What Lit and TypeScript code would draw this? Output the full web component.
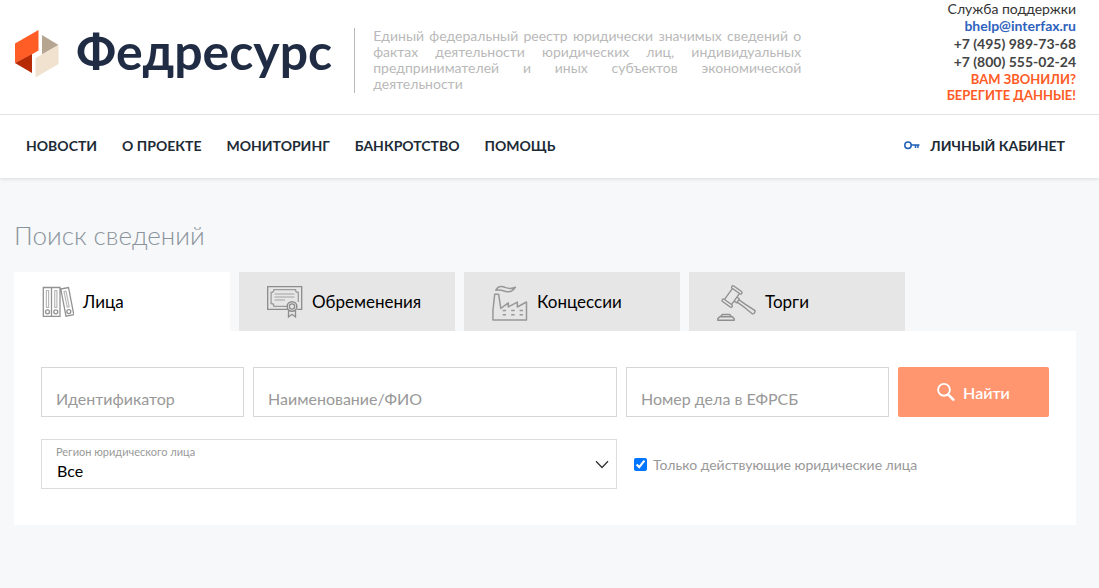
import { LitElement, html, css, svg } from "lit";
import { customElement, state } from "lit/decorators.js";
import { classMap } from "lit/directives/class-map.js";

const logo = svg`<svg width="45" height="54" viewBox="-1 -6 45 54" aria-hidden="true">
  <path fill="#ff5c26" d="M0 13.500 23.500 0v20.500L17.500 24 0 33z"/>
  <path fill="#b72a06" d="M0 33 17 24v19z"/>
  <path fill="#b5a591" d="M27 5l16.500 10L27 24.500z"/>
  <path fill="#f0e2ce" d="M43.500 15v19L20.500 47.500V28z"/>
</svg>`;

const bindersIcon = svg`<svg width="32" height="38" viewBox="0 -2 32 38" fill="none" stroke="#929292" stroke-width="1.3" aria-hidden="true">
  <path d="M1.300 2.500h8.200v28.800H1.300zM9.500 2.500h8.500v28.800H9.500zM18.800 4l7.700-1.500 5.300 27.100-7.800 1.600z"/>
  <path stroke="#b8b8b8" stroke-width="1.200" d="M4.400 5.500h2.200v16.800H4.400zM12.700 5.500h2.200v16.800h-2.200zM22 6.500l2-.4 3.200 15.600-2 .4z"/>
  <circle cx="5.500" cy="26.800" r="2"/><circle cx="13.800" cy="26.800" r="2"/><circle cx="26.800" cy="26.600" r="2"/>
</svg>`;

const certificateIcon = svg`<svg width="36" height="38" viewBox="0 -2 36 38" fill="none" stroke="#8c8c8c" stroke-width="1.300" aria-hidden="true">
  <path d="M21 24.300H.700V1.700h34v22.600h-4.500"/>
  <path stroke="#9c9c9c" d="M20.500 21.300H6.900c0-1.600-1.200-2.800-2.800-2.800v-11c1.600 0 2.800-1.200 2.800-2.800h21.600c0 1.600 1.200 2.800 2.800 2.800v9.500"/>
  <path stroke="#a2a2a2" stroke-width="1.200" d="M7.500 9h20M7.500 12h20M7.500 15H18"/>
  <circle cx="25" cy="21.500" r="4.800" stroke-width="1.500"/><circle cx="25" cy="21.500" r="2.600"/>
  <path d="M21.500 25.300v6.600l3.500-2.600 3.500 2.600v-6.600"/>
</svg>`;

const factoryIcon = svg`<svg width="36" height="38" viewBox="0 -2 36 38" fill="none" stroke="#989898" stroke-width="1.500" stroke-linejoin="round" aria-hidden="true">
  <path d="M.900 34.900V26L2.700 9.200h3.900l2.200 14.200 7.500-5.500v4l9-4.800v4.900l9.200-5v17.900z"/>
  <path d="M3.800 5.300C6.300.300 9.800 1 13.800 2.600c3.400 1.200 6.200 1.200 9.700-.4-3.200 5.100-6.600 5.400-10.600 4-3.600-1.300-6-1.900-9.100-.9z"/>
  <path d="M10.700 25.400H14M19.200 25.400h3.400M27.600 25.400h3.400M10.700 29.700H14M19.200 29.700h3.400M27.600 29.700h3.400"/>
</svg>`;

const gavelIcon = svg`<svg width="39" height="38" viewBox="0 -2 39 38" fill="none" stroke="#8e8e8e" stroke-width="1.300" stroke-linejoin="round" aria-hidden="true">
  <g transform="translate(15 11.500) rotate(36)">
    <rect x="-6" y="-9.600" width="12" height="2.800" rx="1.200"/>
    <rect x="-6" y="6.800" width="12" height="2.800" rx="1.200"/>
    <path d="M-4.300-6.800v13.600M4.300-6.800v13.600"/>
    <path d="M4.300-2.400h3.200v4.800H4.300M7.500-1.500h8l11-.6c1.600 0 1.600 4.200 0 4.200l-11-.6h-8"/>
  </g>
  <path d="M.800 35.300v-1.600l1.800-2h12.800l1.800 2v1.600zM3.600 31.500l1.800-2h7.200l1.800 2" stroke-width="1.400"/>
</svg>`;

const keyIcon = svg`<svg width="16" height="10" viewBox="0 0 16 10" fill="none" stroke="#1f5fb5" stroke-width="1.500" aria-hidden="true">
  <circle cx="4" cy="4.300" r="3.200"/><path d="M7 3.900h8.500M11.500 4.300v2.600M13.900 4.300v2.600"/>
</svg>`;

const searchIcon = svg`<svg width="18" height="20" viewBox="0 0 18 20" fill="none" stroke="#fff" aria-hidden="true">
  <circle cx="7" cy="7.800" r="5.900" stroke-width="1.900"/><path d="m11.300 12.600 5 5" stroke-width="2.700" stroke-linecap="round"/>
</svg>`;

const chevronIcon = svg`<svg class="chevron" width="14" height="9" viewBox="0 0 14 9" fill="none" stroke="#333" stroke-width="1.300" aria-hidden="true">
  <path d="m1 1.200 6 6.300 6-6.300"/>
</svg>`;

const tabs = [
  { id: "persons", label: "Лица", icon: bindersIcon },
  { id: "liens", label: "Обременения", icon: certificateIcon },
  { id: "concessions", label: "Концессии", icon: factoryIcon },
  { id: "auctions", label: "Торги", icon: gavelIcon },
];

const navItems = ["Новости", "О проекте", "Мониторинг", "Банкротство", "Помощь"];

@customElement("site-header")
export class SiteHeader extends LitElement {
  static styles = css`
    :host { display: block; position: relative; background: #fff; box-shadow: 0 1px 4px rgba(0, 0, 0, 0.12); }
    * { box-sizing: border-box; }
    a { color: inherit; text-decoration: none; }
    .top { display: flex; align-items: flex-start; min-height: 115px; padding: 0 23px 0 14px; border-bottom: 1px solid #e3e3e3; }
    .brand { display: flex; align-items: center; gap: 17px; margin-top: 21px; padding-right: 22px; color: #1f2c43; font-size: 50px; font-weight: 700; line-height: 60px; }
    .about { flex: 0 1 447px; margin: 28px 24px 0 0; padding: 0 0 1px 18px; border-left: 1px solid #b8b8b8; color: #b9b9b9; line-height: 16px; text-align: justify; }
    .support { display: flex; flex-direction: column; align-items: flex-end; margin-left: auto; color: #333; line-height: 18px; font-weight: 700; white-space: nowrap; }
    .caption { font-weight: 400; line-height: 17px; }
    .mail { color: #2f62bd; }
    .phone { color: #444; }
    .warning { color: #ff5c26; font-size: 13px; line-height: 16px; text-align: right; }
    .menu { display: flex; align-items: center; gap: 25px; padding: 20px 34px 21px 26px; color: #1c2b36; line-height: 22px; font-weight: 700; text-transform: uppercase; white-space: nowrap; }
    .account { display: flex; align-items: center; gap: 10px; margin-left: auto; }
  `;

  render() {
    return html`
      <header>
        <div class="top">
          <a class="brand" href="#">${logo}<span>Федресурс</span></a>
          <div class="about">Единый федеральный реестр юридически значимых сведений о фактах деятельности юридических лиц, индивидуальных предпринимателей и иных субъектов экономической деятельности</div>
          <div class="support">
            <span class="caption">Служба поддержки</span>
            <a class="mail" href="mailto:bhelp@interfax.ru">bhelp@interfax.ru</a>
            <a class="phone" href="tel:+74959897368">+7 (495) 989-73-68</a>
            <a class="phone" href="tel:+78005550224">+7 (800) 555-02-24</a>
            <a class="warning" href="#">ВАМ ЗВОНИЛИ?<br />БЕРЕГИТЕ ДАННЫЕ!</a>
          </div>
        </div>
        <nav class="menu">
          ${navItems.map((item) => html`<a href="#">${item}</a>`)}
          <a class="account" href="#">${keyIcon}<span>Личный кабинет</span></a>
        </nav>
      </header>
    `;
  }
}

@customElement("search-form")
export class SearchForm extends LitElement {
  static styles = css`
    :host { display: block; background: #fff; }
    * { box-sizing: border-box; }
    input, select, button { font-family: inherit; font-size: 16px; }
    .form { display: grid; grid-template-columns: 203fr 364fr 263fr 151fr; gap: 22px 9px; padding: 36px 27px; }
    .field { min-width: 0; width: 100%; height: 50px; padding: 12px 14px 0; border: 1px solid #d6d6d6; border-radius: 0; background: #fff; color: #000; outline: none; }
    .field::placeholder { color: #999; opacity: 1; }
    .submit { display: flex; align-items: center; justify-content: center; gap: 8px; height: 50px; padding: 0; border: 0; border-radius: 2px; background: #ff9670; color: #fff; font-weight: 600; }
    .region { position: relative; grid-column: span 2; }
    .region-label { position: absolute; top: 5px; left: 15px; color: #999; font-size: 11px; line-height: 16px; }
    .select { appearance: none; display: block; width: 100%; height: 50px; padding: 12px 40px 0 15px; border: 1px solid #dcdcdc; border-radius: 0; background: #fff; color: #000; }
    .chevron { position: absolute; top: 21px; right: 8px; pointer-events: none; }
    .active-only { display: flex; align-items: center; gap: 6px; grid-column: span 2; padding-left: 8px; color: #999; font-size: 14px; }
    .check { width: 13px; height: 13px; margin: 0; accent-color: #0075ff; }
  `;

  render() {
    return html`
      <form class="form" @submit=${(e: Event) => e.preventDefault()}>
        <input class="field" type="text" aria-label="Идентификатор" placeholder="Идентификатор" />
        <input class="field" type="text" aria-label="Наименование/ФИО" placeholder="Наименование/ФИО" />
        <input class="field" type="text" aria-label="Номер дела в ЕФРСБ" placeholder="Номер дела в ЕФРСБ" />
        <button class="submit" type="submit">${searchIcon}<span>Найти</span></button>
        <div class="region">
          <select class="select" id="region"><option>Все</option></select>
          <label class="region-label" for="region">Регион юридического лица</label>
          ${chevronIcon}
        </div>
        <div class="active-only">
          <input class="check" id="active-only" type="checkbox" checked />
          <label for="active-only">Только действующие юридические лица</label>
        </div>
      </form>
    `;
  }
}

@customElement("app-root")
export class AppRoot extends LitElement {
  @state() private active = "persons";

  static styles = css`
    :host { display: block; min-height: 100vh; background: #f6f8fa; font-family: Lato, "Open Sans", sans-serif; font-size: 14px; }
    * { box-sizing: border-box; }
    .content { padding: 41px 23px 42px 14px; }
    .title { margin: 0 0 21px; color: #8b939c; font-size: 26px; font-weight: 300; line-height: 32px; }
    .tabs { display: flex; gap: 9px; }
    .tab { display: flex; flex: 0 1 216px; align-items: center; gap: 9px; height: 59px; padding: 0 0 0 28px; border: 0; background: #e6e6e6; color: #000; font-family: inherit; font-size: 17px; }
    .tab.selected { background: #fff; }
  `;

  render() {
    return html`
      <site-header></site-header>
      <main class="content">
        <h1 class="title">Поиск сведений</h1>
        <div class="tabs" role="tablist">
          ${tabs.map(
            (tab) => html`<button
              class=${classMap({ tab: true, selected: tab.id === this.active })}
              type="button"
              role="tab"
              aria-selected=${tab.id === this.active ? "true" : "false"}
              @click=${() => (this.active = tab.id)}
            >${tab.icon}<span>${tab.label}</span></button>`
          )}
        </div>
        <search-form></search-form>
      </main>
    `;
  }
}
